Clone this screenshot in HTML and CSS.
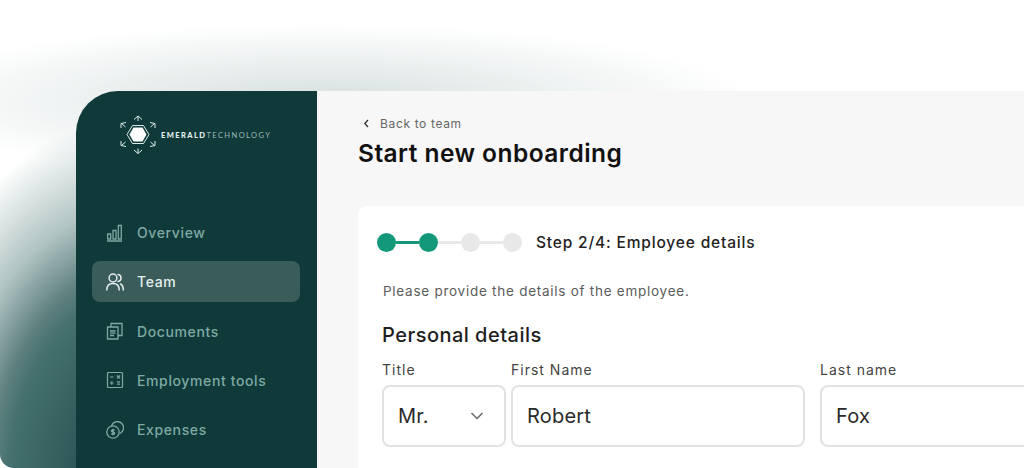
FILE: index.html
```html
<!DOCTYPE html>
<html lang="en">
<head>
  <meta charset="UTF-8">
  <meta name="viewport" content="width=device-width, initial-scale=1.0">
  <title>Start new onboarding</title>
  <link rel="stylesheet" href="styles.css">
</head>
<body>
  <div class="glow"></div>
  <div class="app">
    <aside class="sidebar">
      <div class="logo">
        <svg class="logo-mark" width="36" height="40" viewBox="0 0 36 40" fill="none" stroke="#dcebe8" stroke-width="1">
          <path d="M12.500 10.500h11L29 19.500l-5.500 9h-11L7 19.500z"/>
          <path d="M13.500 12.500h9L26.500 19.500l-4 7h-9l-4-7z" fill="#fff" stroke="none"/>
          <path d="M14 4.500l4-3.500 4 3.500M18 1v5M14 35l4 3.500 4-3.500M18 38.500v-5"/>
          <path d="M1 13V8.500l5-1M1.500 8.500l4 3.500M35 13V8.500l-5-1M34.500 8.500l-4 3.500M1 26v4.500l5 1M1.500 30.500l4-3.500M35 26v4.500l-5 1M34.500 30.500l-4-3.500"/>
        </svg>
        <span class="logo-text"><b>EMERALD</b>TECHNOLOGY</span>
      </div>
      <nav class="nav">
        <a class="nav-item">
          <svg width="18" height="18" viewBox="0 0 18 18" fill="none" stroke="currentColor" stroke-width="1.300">
            <path d="M1 17h15"/>
            <path d="M1.700 10h3v5h-3zM7 6.500h3V15H7zM12.300 1.500h3V15h-3z"/>
          </svg>
          Overview
        </a>
        <a class="nav-item active">
          <svg width="18" height="18" viewBox="0 0 18 18" fill="none" stroke="currentColor" stroke-width="1.500" stroke-linecap="round">
            <circle cx="7" cy="5" r="3.900"/>
            <path d="M.8 17c0-4 2.500-6.500 6.200-6.500s6.200 2.500 6.200 6.500"/>
            <path d="M12 1.500c2 .300 3 1.800 3 3.500s-1 3.200-3 3.500M14.500 11c1.800.900 2.800 3 2.800 6"/>
          </svg>
          Team
        </a>
        <a class="nav-item">
          <svg width="18" height="18" viewBox="0 0 18 18" fill="none" stroke="currentColor" stroke-width="1.300">
            <path d="M1.500 5h10.500v12H1.500z"/>
            <path d="M5 5V1.500h11v12h-4"/>
            <path d="M4 9h5.500M4 11.200h5.500M4 13.500h4"/>
          </svg>
          Documents
        </a>
        <a class="nav-item">
          <svg width="18" height="18" viewBox="0 0 18 18" fill="none" stroke="currentColor" stroke-width="1.200">
            <rect x="1.500" y="1.500" width="15" height="15" rx="1"/>
            <path d="M4 6h3.500M11 4.500l3 3M14 4.500l-3 3M4 12h3.500M5.800 10.200v3.600M11 10.800h3M11 13.200h3"/>
          </svg>
          Employment tools
        </a>
        <a class="nav-item">
          <svg width="18" height="18" viewBox="0 0 18 18" fill="none" stroke="currentColor" stroke-width="1.300">
            <circle cx="7" cy="11" r="6.200"/>
            <path d="M5.500 4.800A6.200 6.200 0 1 1 13.800 12.500"/>
            <path d="M8.700 9.400C8.200 8.700 5.400 8.500 5.400 9.900c0 1.500 3.300 1 3.300 2.400 0 1.400-2.800 1.300-3.400.4M7 7.800v6.400"/>
          </svg>
          Expenses
        </a>
      </nav>
    </aside>

    <main class="content">
      <a class="back">
        <svg width="7" height="9" viewBox="0 0 7 9" fill="none" stroke="#333" stroke-width="1.300"><path d="M5 1L1.800 4.500 5 8"/></svg>
        Back to team
      </a>
      <h1 class="page-title">Start new onboarding</h1>

      <section class="card">
        <div class="stepper">
          <div class="steps">
            <span class="dot done"></span>
            <span class="line done"></span>
            <span class="dot done"></span>
            <span class="line"></span>
            <span class="dot"></span>
            <span class="line"></span>
            <span class="dot"></span>
          </div>
          <span class="step-label">Step 2/4: Employee details</span>
        </div>
        <div class="card-body">
          <p class="hint">Please provide the details of the employee.</p>
          <h2 class="section-title">Personal details</h2>
          <div class="fields">
            <div class="field field-title">
              <label>Title</label>
              <div class="input">Mr.
                <svg class="chevron" width="14" height="8" viewBox="0 0 14 8" fill="none" stroke="#666" stroke-width="1.500"><path d="M1.500 1l5.500 5.500L12.500 1"/></svg>
              </div>
            </div>
            <div class="field field-first">
              <label>First Name</label>
              <div class="input">Robert</div>
            </div>
            <div class="field field-last">
              <label>Last name</label>
              <div class="input">Fox</div>
            </div>
          </div>
        </div>
      </section>
    </main>
  </div>
</body>
</html>
```

FILE: styles.css
```css
* {
  margin: 0;
  padding: 0;
  box-sizing: border-box;
}

html, body {
  height: 468px;
  overflow: hidden;
}

body {
  position: relative;
  background: #fff;
  font-family: "Inter", "Open Sans", sans-serif;
  color: #1c1c1c;
}

/* soft shadow behind the window */
.glow {
  position: absolute;
  left: 0;
  top: 0;
  width: 1024px;
  height: 468px;
  border-radius: 0 0 0 14px;
  background:
    radial-gradient(ellipse 240px 360px at 130px 480px, #1a4545 0, #44706e 50%, #5f8180 58%, #b0c4c2 75%, rgba(255,255,255,0) 100%),
    radial-gradient(ellipse 430px 76px at 320px 100px, rgba(160,182,180,.42), rgba(255,255,255,0) 100%);
}

.app {
  position: relative;
  display: flex;
  margin: 91px 0 0 76px;
  width: 948px;
  height: 377px;
  background: #f7f7f7;
  border-top-left-radius: 42px;
  overflow: hidden;
}

.sidebar {
  flex: 0 0 241px;
  background: #103a3a;
  padding: 24px 17px 0 16px;
}

.logo {
  display: flex;
  align-items: center;
  gap: 5px;
  padding-left: 28px;
  height: 40px;
}

.logo-text {
  font-family: "Lato", sans-serif;
  font-size: 7.500px;
  letter-spacing: 1.420px;
  color: #9db8b5;
  white-space: nowrap;
}

.logo-text b {
  color: #e6f0ee;
  font-weight: 900;
}

.nav {
  display: flex;
  flex-direction: column;
  gap: 8.300px;
  margin-top: 57px;
}

.nav-item {
  display: flex;
  align-items: center;
  gap: 13px;
  height: 41px;
  padding-left: 14px;
  border-radius: 8px;
  font-size: 14px;
  font-weight: 500;
  letter-spacing: .62px;
  color: #7fa9a3;
}

.nav-item.active {
  background: #3a5c5b;
  color: #e4efec;
}

.content {
  flex: 1;
  padding: 25px 0 0 41px;
}

.back {
  display: flex;
  align-items: center;
  gap: 10px;
  padding-left: 5px;
  font-size: 12px;
  letter-spacing: .65px;
  color: #666;
}

.page-title {
  margin-top: 7px;
  font-size: 24.500px;
  font-weight: 600;
  letter-spacing: .45px;
  line-height: 30px;
  color: #111;
}

.card {
  margin-top: 38px;
  height: 300px;
  background: #fff;
  border-radius: 8px 0 0 0;
}

.stepper {
  display: flex;
  align-items: center;
  gap: 14px;
  padding: 27px 0 0 19px;
}

.steps {
  display: flex;
  align-items: center;
}

.dot {
  width: 19px;
  height: 19px;
  border-radius: 50%;
  background: #e8e8e8;
}

.line {
  width: 23px;
  height: 3px;
  background: #e8e8e8;
}

.dot.done, .line.done {
  background: #13997a;
}

.step-label {
  font-size: 15.500px;
  font-weight: 500;
  letter-spacing: .83px;
  color: #222;
}

.card-body {
  padding: 31px 0 0 25px;
}

.hint {
  font-size: 13.500px;
  letter-spacing: .74px;
  line-height: 16px;
  color: #5c5c5c;
}

.section-title {
  margin: 24px 0 0 -1px;
  font-size: 20px;
  font-weight: 500;
  letter-spacing: .48px;
  line-height: 24px;
  color: #1e1e1e;
}

.fields {
  display: flex;
  gap: 5px;
  margin: 14px 0 0 -1px;
}

.field label {
  display: block;
  font-size: 14px;
  letter-spacing: 1px;
  line-height: 18px;
  color: #444;
}

.field-title { width: 124px; }
.field-first { width: 294px; margin-right: 10px; }
.field-last { width: 300px; }

.input {
  display: flex;
  align-items: center;
  justify-content: space-between;
  height: 62px;
  margin-top: 6px;
  padding: 0 14px;
  border: 2px solid #e2e2e2;
  border-radius: 8px;
  font-size: 20px;
  letter-spacing: .2px;
  color: #2a2a2a;
}

.chevron {
  margin-right: 6px;
}
```
